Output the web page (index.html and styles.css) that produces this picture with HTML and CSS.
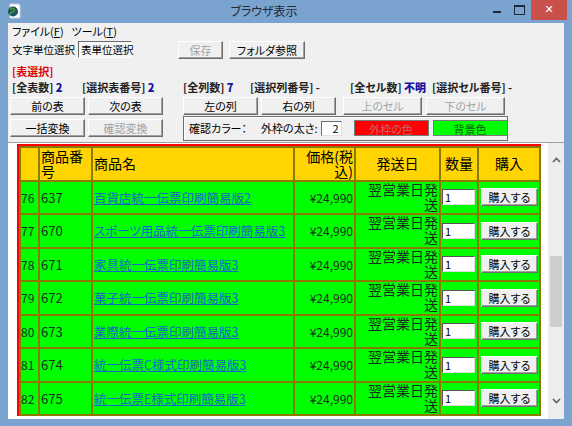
FILE: index.html
```html
<!DOCTYPE html>
<html lang="ja">
<head>
    <meta charset="UTF-8">
    <title>ブラウザ表示</title>
    <link rel="stylesheet" href="styles.css">
</head>
<body>
    <div class="window">
        <div class="titlebar">
            <svg class="app-icon" width="14" height="16" viewBox="0 0 14 16">
                <path d="M3 1h8a2 2 0 0 1 2 2v11a1 1 0 0 1-1 1H3z" fill="#fff" stroke="#c9d6e2"/>
                <circle cx="6" cy="8.5" r="5" fill="#1f4f63"/>
                <path d="M3 7c1-2 3-2 4-1s0 3-2 3-2 2-1 3" fill="none" stroke="#3d9a3a" stroke-width="1.6"/>
            </svg>
            <div class="title">ブラウザ表示</div>
            <div class="caption">
                <span class="cap-min"></span>
                <span class="cap-max"></span>
                <span class="cap-close">✕</span>
            </div>
        </div>

        <div class="client">
            <div class="menubar">
                <span>ファイル(<u>F</u>)</span>
                <span>ツール(<u>T</u>)</span>
            </div>

            <div class="mode-row">
                <span class="mode">文字単位選択</span>
                <span class="mode current">表単位選択</span>
                <button class="btn btn-save" disabled>保存</button>
                <button class="btn btn-folder">フォルダ参照</button>
            </div>

            <div class="section-title">[表選択]</div>

            <div class="info-row">
                <span class="info w-table">[全表数] <b>2</b></span>
                <span class="info w-tno">[選択表番号] <b>2</b></span>
                <span class="info w-col">[全列数] <b>7</b></span>
                <span class="info w-cno">[選択列番号] -</span>
                <span class="info w-cell">[全セル数] <b>不明</b></span>
                <span class="info">[選択セル番号] -</span>
            </div>

            <div class="btn-row">
                <button class="btn">前の表</button>
                <button class="btn">次の表</button>
                <button class="btn gap-left">左の列</button>
                <button class="btn">右の列</button>
                <button class="btn cell-btn" disabled>上のセル</button>
                <button class="btn cell-btn" disabled>下のセル</button>
            </div>

            <div class="btn-row second">
                <button class="btn">一括変換</button>
                <button class="btn" disabled>確認変換</button>
                <div class="color-box">
                    <span>確認カラー：</span>
                    <span class="border-label">外枠の太さ:</span>
                    <input class="border-width" type="text" value="2">
                    <button class="swatch swatch-red">外枠の色</button>
                    <button class="swatch swatch-green">背景色</button>
                </div>
            </div>

            <div class="viewer">
                <div class="page">
                    <div class="frame">
                        <table class="goods">
                            <colgroup>
                                <col class="c-no"><col class="c-code"><col class="c-name"><col class="c-price">
                                <col class="c-ship"><col class="c-qty"><col class="c-buy">
                            </colgroup>
                            <thead>
                                <tr>
                                    <th></th>
                                    <th class="left">商品番号</th>
                                    <th class="left">商品名</th>
                                    <th class="right">価格(税込)</th>
                                    <th>発送日</th>
                                    <th>数量</th>
                                    <th>購入</th>
                                </tr>
                            </thead>
                            <tbody id="rows"></tbody>
                        </table>
                    </div>
                </div>
                <div class="scrollbar">
                    <span class="arrow">
                        <svg width="9" height="6" viewBox="0 0 9 6"><path d="M1 5l3.5-3.5L8 5" fill="none" stroke="#606060" stroke-width="1.6"/></svg>
                    </span>
                    <span class="thumb"></span>
                    <span class="arrow down">
                        <svg width="9" height="6" viewBox="0 0 9 6"><path d="M1 1l3.5 3.5L8 1" fill="none" stroke="#606060" stroke-width="1.6"/></svg>
                    </span>
                </div>
            </div>
        </div>
    </div>

    <script>
        // 表示中の行 (76〜82)
        const items = [
            [76, 637, '百貨店統一伝票印刷簡易版2'],
            [77, 670, 'スポーツ用品統一伝票印刷簡易版3'],
            [78, 671, '家具統一伝票印刷簡易版3'],
            [79, 672, '菓子統一伝票印刷簡易版3'],
            [80, 673, '業際統一伝票印刷簡易版3'],
            [81, 674, '統一伝票C様式印刷簡易版3'],
            [82, 675, '統一伝票E様式印刷簡易版3']
        ];
        const tbody = document.getElementById('rows');
        items.forEach(function(item){
            const tr = document.createElement('tr');
            tr.innerHTML =
                '<td class="num">' + item[0] + '</td>' +
                '<td>' + item[1] + '</td>' +
                '<td><a href="#">' + item[2] + '</a></td>' +
                '<td class="right price">¥24,990</td>' +
                '<td class="right ship">翌営業日発送</td>' +
                '<td><input class="qty" type="text" value="1"></td>' +
                '<td><button class="buy">購入する</button></td>';
            tbody.append(tr);
        });
    </script>
</body>
</html>
```

FILE: styles.css
```css
* {box-sizing: border-box;}
body {
    margin: 0;
    font-family: "Noto Sans CJK JP", sans-serif;
    font-size: 11px;
    font-feature-settings: "palt";
    color: #000;
}
.window {
    width: 572px;
    height: 426px;
    background-color: #7ba3cf;
    display: flex;
    flex-direction: column;
}

/* タイトルバー */
.titlebar {
    height: 23px;
    display: flex;
    align-items: center;
    padding-left: 7px;
}
.app-icon {display: block;}
.title {
    flex: 1;
    text-align: center;
    padding-left: 20px;
    font-size: 12px;
    line-height: 16px;
    color: #1e2a36;
}
.caption {
    display: flex;
    align-self: flex-start;
    margin-right: 5px;
}
.cap-min, .cap-max {width: 22px; height: 20px; position: relative;}
.cap-min::after {
    content: "";
    position: absolute;
    left: 6px; top: 11px;
    width: 8px; height: 2px;
    background: #1c2b3a;
}
.cap-max::after {
    content: "";
    position: absolute;
    left: 5px; top: 5px;
    width: 9px; height: 7px;
    border: 1px solid #1c2b3a;
    border-top-width: 2px;
}
.cap-close {
    width: 36px;
    height: 20px;
    background-color: #c9504b;
    color: #fff;
    font-size: 11px;
    line-height: 20px;
    text-align: center;
    font-family: "DejaVu Sans", sans-serif;
}

/* クライアント領域 */
.client {
    flex: 1;
    margin: 0 8px 7px;
    background-color: #f0f0f0;
    display: flex;
    flex-direction: column;
}
.menubar {
    height: 16px;
    line-height: 16px;
    padding-left: 4px;
    display: flex;
    gap: 8px;
}
.mode-row {
    height: 22px;
    display: flex;
    align-items: center;
    padding-left: 4px;
    white-space: nowrap;
}
.mode {width: 66px; line-height: 15px; font-size: 10.5px;}
.mode.current {
    width: 54px;
    height: 17px;
    padding-left: 2px;
    border: 1px solid;
    border-color: #6a6a6a #fff #fff #6a6a6a;
    background-color: #f7f7f7;
}
.btn {
    height: 18px;
    width: 75px;
    padding: 0;
    font-family: inherit;
    font-feature-settings: "palt";
    font-size: 11px;
    line-height: 14px;
    white-space: nowrap;
    background-color: #f0f0f0;
    border: 1px solid;
    border-color: #fff #6d6d6d #6d6d6d #fff;
    box-shadow: inset -1px -1px #a0a0a0;
    color: #000;
}
.btn:disabled {color: #a3a3a3;}
.btn-save {width: 45px; margin-left: 46px;}
.btn-folder {width: 76px; margin-left: 6px;}

.section-title {
    margin-top: 3px;
    height: 15px;
    line-height: 15px;
    padding-left: 4px;
    color: #e00000;
    font-weight: bold;
}
.info-row {
    height: 16px;
    line-height: 16px;
    padding-left: 4px;
    display: flex;
    font-weight: bold;
    color: #222;
    white-space: nowrap;
}
.info b {color: #1414a0;}
.w-table {width: 70px;}
.w-tno {width: 101px;}
.w-col {width: 67px;}
.w-cno {width: 100px;}
.w-cell {width: 82px;}

.btn-row {
    display: flex;
    gap: 3px;
    padding-left: 2px;
    margin-top: 2px;
    height: 18px;
}
.btn-row .gap-left {margin-left: 17px;}
.btn-row .cell-btn {width: 79px; margin-left: 4px;}
.btn-row .cell-btn + .cell-btn {margin-left: 1px;}
.btn-row.second {
    margin-top: 1px;
    height: 25px;
    align-items: center;
}
.color-box {
    margin-left: 17px;
    width: 325px;
    height: 25px;
    display: flex;
    align-items: center;
    padding-left: 5px;
    white-space: nowrap;
    border: 1px solid #6d6d6d;
    box-shadow: inset 1px 1px #fff;
}
.border-label {margin-left: 14px;}
.border-width {
    width: 21px;
    height: 15px;
    margin-left: 3px;
    padding: 0 2px;
    text-align: right;
    font-family: inherit;
    font-size: 11px;
    border: 1px solid;
    border-color: #6d6d6d #e0e0e0 #e0e0e0 #6d6d6d;
    flex-shrink: 0;
}
.swatch {
    width: 75px;
    height: 16px;
    padding: 0;
    margin-left: 12px;
    flex-shrink: 0;
    font-family: inherit;
    font-feature-settings: "palt";
    font-size: 11px;
    border: 1px solid #7a7a7a;
}
.swatch-red {background-color: #ff0000; color: #c46a6a;}
.swatch-green {background-color: #00ff00; color: #0d5d0d; margin-left: 4px;}

/* ブラウザ部分 */
.viewer {
    margin-top: 1px;
    flex: 1;
    display: flex;
    border-top: 1px solid #a0a0a0;
    background-color: #fff;
    overflow: hidden;
}
.page {
    flex: 1;
    overflow: hidden;
    padding: 1px 0 0 9px;
}
.frame {
    display: inline-block;
    border-left: 2px solid #ff0000;
    border-top: 2px solid #ff0000;
}
.goods {
    table-layout: fixed;
    width: 522px;
    border-collapse: separate;
    border-spacing: 2px;
    background-color: #8b7a00;
    font-size: 13px;
}
.c-no {width: 17px;}
.c-code {width: 51px;}
.c-name {width: 200px;}
.c-price {width: 59px;}
.c-ship {width: 83px;}
.c-qty {width: 36px;}
.c-buy {width: 60px;}

.goods th, .goods td {
    padding: 0 1px;
    vertical-align: middle;
}
.goods th {
    height: 32px;
    background-color: #ffd400;
    font-weight: normal;
    font-size: 14px;
    line-height: 15px;
    text-align: center;
    font-feature-settings: normal;
}
.goods td {
    height: 31.5px;
    background-color: #00ff00;
    color: #1d2d1d;
    line-height: 15px;
    white-space: nowrap;
}
.goods .num {padding: 0; font-size: 12px;}
.goods .left {text-align: left;}
.goods .right {text-align: right;}
.goods a {color: #1466c8; font-size: 12.5px;}
.goods .price {font-size: 12px;}
.goods .ship {
    white-space: normal;
    font-size: 14px;
    line-height: 15px;
    vertical-align: top;
    font-feature-settings: normal;
}
.qty {
    width: 33px;
    height: 16px;
    padding: 0 2px;
    font-family: inherit;
    font-size: 11px;
    border: 1px solid;
    border-color: #555 #ddd #ddd #555;
    display: block;
}
.buy {
    width: 57px;
    height: 18px;
    padding: 0;
    margin-left: 1px;
    font-family: inherit;
    font-feature-settings: "palt";
    font-size: 11px;
    background-color: #f0f0f0;
    border: 1px solid;
    border-color: #fff #6d6d6d #6d6d6d #fff;
    box-shadow: inset -1px -1px #a0a0a0;
}

.scrollbar {
    width: 16px;
    background-color: #ededed;
    display: flex;
    flex-direction: column;
    align-items: center;
    padding: 9px 0 10px;
}
.arrow {
    height: 17px;
    display: flex;
    align-items: center;
    justify-content: center;
}
.thumb {
    width: 12px;
    height: 71px;
    margin-top: 87px;
    background-color: #cdcdcd;
}
.arrow.down {margin-top: auto;}
```
